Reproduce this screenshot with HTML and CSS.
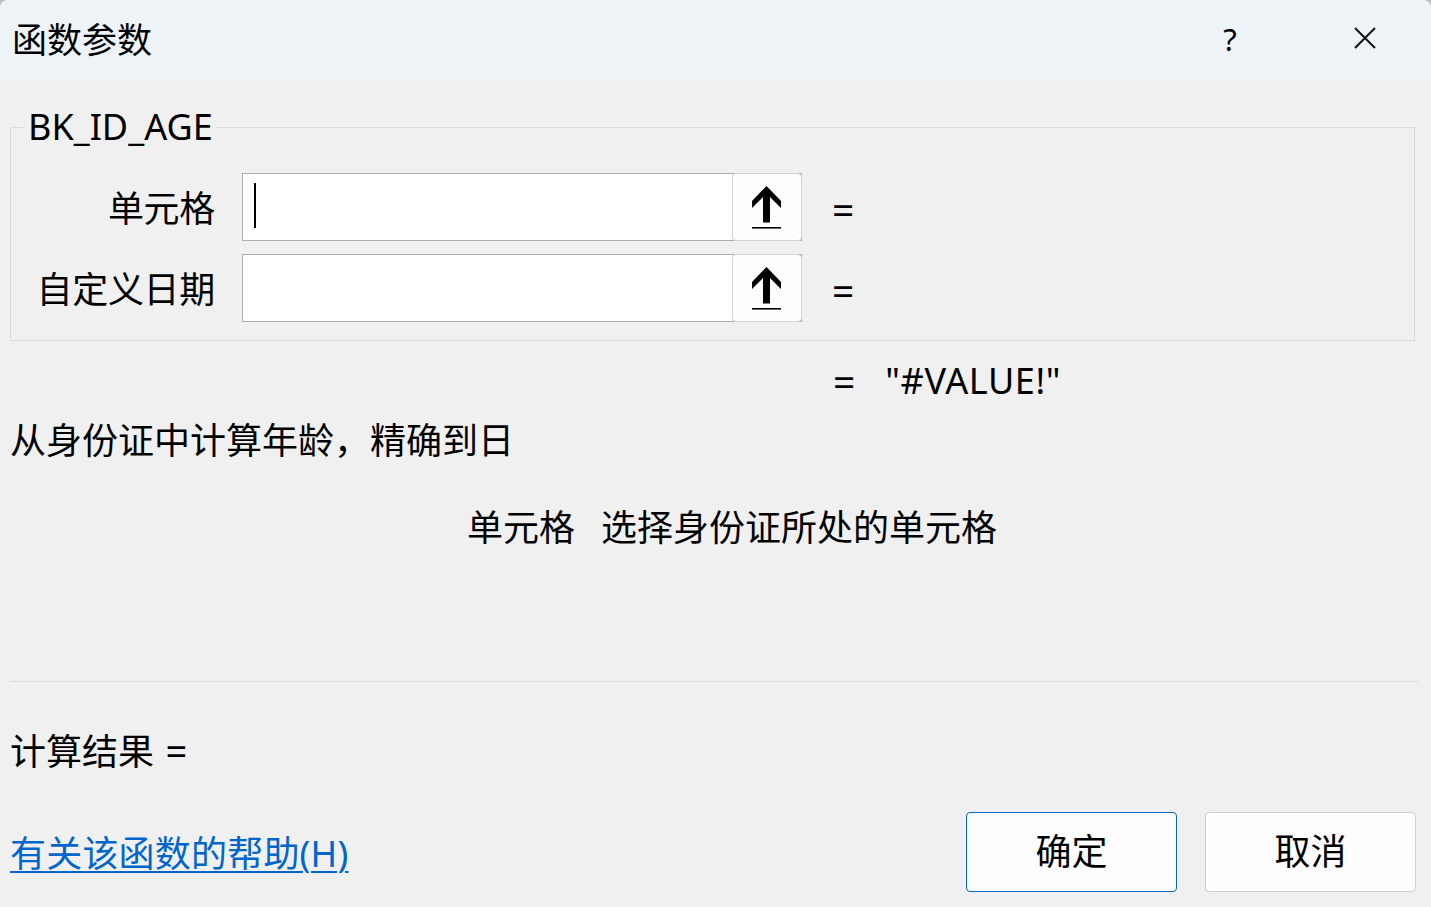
FILE: index.html
```html
<!DOCTYPE html>
<html lang="zh-CN">
<head>
<meta charset="utf-8">
<title>函数参数</title>
<link rel="stylesheet" href="styles.css">
</head>
<body>
<div class="window">
  <div class="titlebar">
    <div class="title">函数参数</div>
    <div class="title-actions">
      <span class="help">?</span>
      <span class="close">
        <svg width="22" height="22" viewBox="0 0 22 22"><path d="M1 1 L21 21 M21 1 L1 21" stroke="#111" stroke-width="2" fill="none"/></svg>
      </span>
    </div>
  </div>
  <div class="content">
    <fieldset class="group">
      <legend>BK_ID_AGE</legend>
      <div class="arg-row">
        <label class="arg-label">单元格</label>
        <div class="arg-input">
          <span class="caret"></span>
          <span class="ref-btn">
            <svg width="30" height="43" viewBox="0 0 30 43"><polygon points="14.5,0 29,15 29,22 18,11 18,36.5 11,36.5 11,11 0,22 0,15" fill="#000"/><rect x="0" y="41" width="29" height="1.6" fill="#000"/></svg>
          </span>
        </div>
        <span class="eq">=</span>
      </div>
      <div class="arg-row">
        <label class="arg-label">自定义日期</label>
        <div class="arg-input">
          <span class="ref-btn">
            <svg width="30" height="43" viewBox="0 0 30 43"><polygon points="14.5,0 29,15 29,22 18,11 18,36.5 11,36.5 11,11 0,22 0,15" fill="#000"/><rect x="0" y="41" width="29" height="1.6" fill="#000"/></svg>
          </span>
        </div>
        <span class="eq">=</span>
      </div>
    </fieldset>
    <div class="result-line">
      <span class="eq">=</span>
      <span class="value">"#VALUE!"</span>
    </div>
    <div class="desc">从身份证中计算年龄，精确到日</div>
    <div class="param-desc">
      <span class="param-name">单元格</span>
      <span class="param-text">选择身份证所处的单元格</span>
    </div>
    <hr class="sep">
    <div class="calc-result">计算结果 <span class="eq-inline">=</span></div>
    <div class="footer">
      <a class="help-link" href="#">有关该函数的帮助(H)</a>
      <div class="buttons">
        <button class="btn btn-primary">确定</button>
        <button class="btn">取消</button>
      </div>
    </div>
  </div>
</div>
</body>
</html>
```

FILE: styles.css
```css
html, body {
  margin: 0;
  padding: 0;
  background: #bdbdbd;
}
body {
  width: 1431px;
  height: 907px;
  overflow: hidden;
  font-family: "Noto Sans", "Noto Sans CJK SC", sans-serif;
  color: #000;
}
.window {
  width: 1431px;
  height: 907px;
  background: #f0f0f0;
  border-radius: 8px 8px 0 0;
  overflow: hidden;
}
.titlebar {
  height: 80px;
  background: #edf3f7;
  display: flex;
  align-items: center;
  justify-content: space-between;
  padding-left: 12px;
}
.title {
  font-size: 35px;
  line-height: 48px;
}
.title-actions {
  display: flex;
  align-items: center;
  height: 80px;
}
.help {
  font-size: 31px;
  line-height: 36px;
  width: 30px;
  text-align: center;
  margin-right: 109px;
  margin-top: -3px;
}
.close {
  display: flex;
  width: 22px;
  height: 22px;
  margin-right: 55px;
  margin-top: -4px;
}
.content {
  padding: 0 16px 0 10px;
}
.group {
  margin: 23px 0 0 0;
  padding: 22px 0 18px 0;
  border: 1px solid #dadada;
  min-width: 0;
  display: flex;
  flex-direction: column;
  gap: 13px;
}
.group legend {
  font-size: 36px;
  line-height: 48px;
  padding: 0 3px;
  margin-left: 14px;
}
.arg-row {
  display: flex;
  align-items: center;
  height: 68px;
}
.arg-label {
  width: 204px;
  text-align: right;
  font-size: 36px;
  line-height: 48px;
  margin-right: 27px;
  margin-top: 3px;
  letter-spacing: -0.3px;
}
.arg-input {
  width: 560px;
  height: 68px;
  box-sizing: border-box;
  border: 1px solid #adadad;
  background: #fff;
  display: flex;
  align-items: stretch;
  justify-content: space-between;
}
.caret {
  width: 2px;
  height: 45px;
  background: #000;
  margin: 9px 0 0 11px;
}
.ref-btn {
  margin-left: auto;
  width: 70px;
  box-sizing: border-box;
  border: 1px solid #d2d2d2;
  border-radius: 4px;
  margin-top: -1px;
  margin-bottom: -1px;
  margin-right: -1px;
  background: #fdfdfd;
  display: flex;
  align-items: center;
  justify-content: center;
}
.ref-btn svg {
  display: block;
  margin-left: -1px;
}
.eq {
  font-size: 39px;
  line-height: 48px;
  margin-left: 30px;
  margin-top: 4px;
}
.result-line {
  margin-top: 15px;
  padding-left: 793px;
  display: flex;
  align-items: center;
  height: 48px;
}
.result-line .eq {
  margin-left: 30px;
  margin-top: 2px;
}
.result-line .value {
  font-size: 36px;
  line-height: 48px;
  margin-left: 30px;
  margin-top: 2px;
  letter-spacing: 0.6px;
}
.desc {
  margin-top: 13px;
  font-size: 36px;
  line-height: 48px;
}
.param-desc {
  margin-top: 39px;
  padding-left: 457px;
  font-size: 36px;
  line-height: 48px;
  display: flex;
  gap: 26px;
}
.sep {
  margin: 129px -3px 0 0;
  border: none;
  border-top: 1px solid #dcdcdc;
  height: 0;
}
.calc-result {
  margin-top: 44px;
  font-size: 36px;
  line-height: 48px;
}
.eq-inline {
  font-size: 38px;
  margin-left: 2px;
}
.footer {
  margin-top: 36px;
  display: flex;
  align-items: center;
  justify-content: space-between;
  margin-right: -1px;
}
.help-link {
  color: #0066cc;
  font-size: 36px;
  line-height: 48px;
  text-decoration: underline;
  text-decoration-thickness: 2px;
  text-underline-offset: 4px;
  letter-spacing: 0.2px;
  margin-top: 3px;
}
.buttons {
  display: flex;
  gap: 28px;
}
.btn {
  width: 211px;
  height: 80px;
  box-sizing: border-box;
  border: 1px solid #cfcfcf;
  border-radius: 4px;
  background: #fdfdfd;
  font-family: "Noto Sans", "Noto Sans CJK SC", sans-serif;
  font-size: 36px;
  line-height: 48px;
  color: #000;
  padding: 0;
}
.btn-primary {
  border-color: #0067c0;
}
```
